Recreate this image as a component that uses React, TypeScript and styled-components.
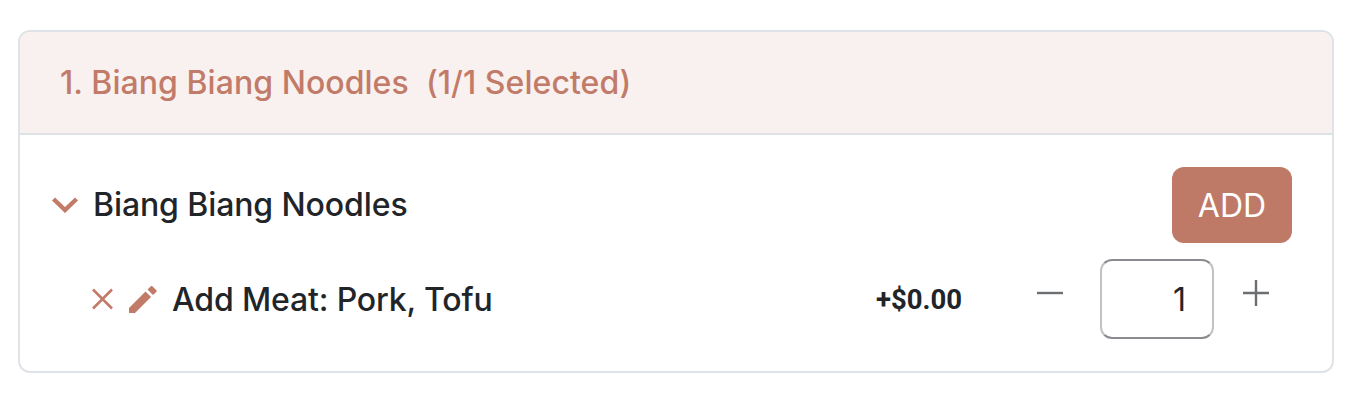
import React from "react";
import styled, { createGlobalStyle } from "styled-components";

const Global = createGlobalStyle`
  html, body { margin: 0; padding: 0; background: #fff; }
  body { font-family: Inter, "Liberation Sans", sans-serif; color: #212529; }
`;

const Page = styled.div`
  width: 1362px;
  height: 400px;
  box-sizing: border-box;
  padding: 30px 28px 27px 18px;
  overflow: hidden;
`;

const Card = styled.section`
  box-sizing: border-box;
  width: 1316px;
  height: 343px;
  border: 2px solid #dfe3e8;
  border-radius: 12px;
  overflow: hidden;
`;

const Header = styled.header`
  box-sizing: border-box;
  height: 103px;
  display: flex;
  align-items: center;
  padding: 0 40px;
  background: #f9f1ef;
  border-bottom: 2px solid #dfe3e8;
`;

const Title = styled.h2`
  margin: 0;
  font-size: 32px;
  font-weight: 500;
  letter-spacing: 0.05px;
  color: #c17b68;
  white-space: pre;
`;

const Body = styled.div`
  display: flex;
  flex-direction: column;
  padding: 32px 40px 0 32px;
`;

const ItemRow = styled.div`
  display: flex;
  align-items: center;
  height: 76px;
`;

const Toggle = styled.span`
  display: flex;
  width: 26px;
  margin-right: 15px;
  color: #c17b68;
`;

const ItemName = styled.span`
  flex: 1;
  font-size: 32px;
  font-weight: 500;
  letter-spacing: -0.1px;
  color: #212529;
  position: relative;
  top: -1px;
`;

const AddButton = styled.button`
  width: 120px;
  height: 76px;
  border: 0;
  border-radius: 12px;
  background: #bf7967;
  color: #fff;
  font-family: inherit;
  font-size: 32px;
  font-weight: 400;
`;

const OptionRow = styled.div`
  display: flex;
  align-items: center;
  height: 80px;
  margin-top: 16px;
  padding: 0 23px 0 40px;
`;

const IconButton = styled.span`
  display: flex;
  color: #c17b68;
  margin-right: ${(p: { $gap: number }) => p.$gap}px;
`;

const OptionName = styled.span`
  font-size: 32px;
  font-weight: 500;
  letter-spacing: -0.15px;
  color: #212529;
  flex: 1;
  margin-left: -1px;
`;

const Price = styled.span`
  font-family: Roboto, "Liberation Sans", sans-serif;
  font-size: 27.5px;
  font-weight: 700;
  color: #212529;
  margin-right: 75px;
`;

const Stepper = styled.span`
  display: flex;
  color: #6c6f72;
  position: relative;
  top: -6px;
`;

const Qty = styled.input`
  box-sizing: border-box;
  width: 114px;
  height: 80px;
  margin: 0 29px 0 37px;
  padding: 0 26px 0 0;
  border: 2px solid;
  border-color: #8b8b90 #c2c2c4 #8b8b90 #c2c2c4;
  border-radius: 12px;
  background: #fff;
  color: #212529;
  font-family: inherit;
  font-size: 32px;
  text-align: right;
  outline: none;
`;

export default function App() {
  return (
    <Page>
      <Global />
      <Card>
        <Header>
          <Title>1. Biang Biang Noodles  (1/1 Selected)</Title>
        </Header>
        <Body>
          <ItemRow>
            <Toggle>
              <svg width="26" height="16" viewBox="0 0 26 16" fill="none" stroke="currentColor" strokeWidth="4.4">
                <path d="M1.5 2 13 13 24.5 2" />
              </svg>
            </Toggle>
            <ItemName>Biang Biang Noodles</ItemName>
            <AddButton>ADD</AddButton>
          </ItemRow>
          <OptionRow>
            <IconButton $gap={16}>
              <svg width="21" height="22" viewBox="0 0 21 22" fill="none" stroke="currentColor" strokeWidth="2.6">
                <path d="M1 1.5 20 20.5M20 1.5 1 20.5" />
              </svg>
            </IconButton>
            <IconButton $gap={16}>
              <svg width="28" height="27" viewBox="0 0 28 27" fill="currentColor">
                <path d="M0 27V22L16.5 5.5 22 11 6 27Z" />
                <path d="M18.5 3.5 21.6.4a1.4 1.4 0 0 1 2 0l3.6 3.6a1.4 1.4 0 0 1 0 2L24 9Z" />
              </svg>
            </IconButton>
            <OptionName>Add Meat: Pork, Tofu</OptionName>
            <Price>+$0.00</Price>
            <Stepper>
              <svg width="26" height="26" viewBox="0 0 26 26" fill="none" stroke="currentColor" strokeWidth="2.4">
                <path d="M0 13H26" />
              </svg>
            </Stepper>
            <Qty type="text" readOnly value="1" />
            <Stepper>
              <svg width="26" height="26" viewBox="0 0 26 26" fill="none" stroke="currentColor" strokeWidth="2.4">
                <path d="M0 13H26M13 0V26" />
              </svg>
            </Stepper>
          </OptionRow>
        </Body>
      </Card>
    </Page>
  );
}
